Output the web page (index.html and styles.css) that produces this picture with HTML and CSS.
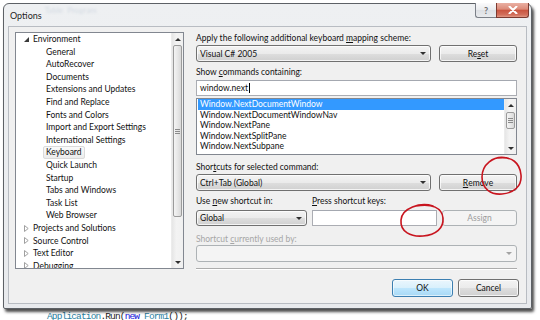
FILE: index.html
```html
<!DOCTYPE html>
<html lang="en">
  <head>
    <meta charset="UTF-8" />
    <title>Options</title>
    <link rel="stylesheet" href="styles.css">
  </head>
  <body>
    <div class="dialog">
      <!-- caption bar -->
      <div class="titlebar">
        <span class="title">Options</span>
        <span class="ghost">Table &nbsp;Program</span>
        <div class="caption-buttons">
          <span class="cap-btn help">?</span>
          <span class="cap-btn close">
            <svg width="10" height="8" viewBox="0 0 10 8"><path d="M1.5 0.5L8.5 7.5M8.5 0.5L1.5 7.5" stroke="#fff" stroke-width="2" stroke-linecap="round"/></svg>
          </span>
        </div>
      </div>

      <div class="client">
        <div class="main">
          <!-- left tree -->
          <div class="tree">
            <ul class="tree-items">
              <li class="node"><span class="arrow"><svg width="5" height="5" viewBox="0 0 5 5"><path d="M5 0V5H0Z" fill="#3a3a3a"/></svg></span>Environment</li>
              <li class="child"><span>General</span></li>
              <li class="child"><span>AutoRecover</span></li>
              <li class="child"><span>Documents</span></li>
              <li class="child"><span>Extensions and Updates</span></li>
              <li class="child"><span>Find and Replace</span></li>
              <li class="child"><span>Fonts and Colors</span></li>
              <li class="child"><span>Import and Export Settings</span></li>
              <li class="child"><span>International Settings</span></li>
              <li class="child"><span class="selected">Keyboard</span></li>
              <li class="child"><span>Quick Launch</span></li>
              <li class="child"><span>Startup</span></li>
              <li class="child"><span>Tabs and Windows</span></li>
              <li class="child"><span>Task List</span></li>
              <li class="child"><span>Web Browser</span></li>
              <li class="node"><span class="arrow"><svg width="5" height="7" viewBox="0 0 5 7"><path d="M0.5 0.5L4.2 3.5L0.5 6.5Z" fill="none" stroke="#a0a0a0"/></svg></span>Projects and Solutions</li>
              <li class="node"><span class="arrow"><svg width="5" height="7" viewBox="0 0 5 7"><path d="M0.5 0.5L4.2 3.5L0.5 6.5Z" fill="none" stroke="#a0a0a0"/></svg></span>Source Control</li>
              <li class="node"><span class="arrow"><svg width="5" height="7" viewBox="0 0 5 7"><path d="M0.5 0.5L4.2 3.5L0.5 6.5Z" fill="none" stroke="#a0a0a0"/></svg></span>Text Editor</li>
              <li class="node"><span class="arrow"><svg width="5" height="7" viewBox="0 0 5 7"><path d="M0.5 0.5L4.2 3.5L0.5 6.5Z" fill="none" stroke="#a0a0a0"/></svg></span>Debugging</li>
            </ul>
            <div class="vscroll tree-scroll">
              <span class="sb-arrow"><i class="tri-up"></i></span>
              <span class="thumb"><i></i><i></i><i></i></span>
              <span class="sb-fill"></span>
              <span class="sb-arrow"><i class="tri-down"></i></span>
            </div>
          </div>

          <!-- right panel -->
          <div class="panel">
            <div class="label">Apply the following additional keyboard <u>m</u>apping scheme:</div>
            <div class="row row-btn gap1">
              <div class="combo">Visual C# 2005<i class="tri-down"></i></div>
              <div class="button">Re<u>s</u>et</div>
            </div>

            <div class="label gap4">Show <u>c</u>ommands containing:</div>
            <div class="textbox gap2">window.next<span class="caret"></span></div>

            <div class="listbox gap2">
              <ul class="list-items">
                <li class="selected">Window.NextDocumentWindow</li>
                <li>Window.NextDocumentWindowNav</li>
                <li>Window.NextPane</li>
                <li>Window.NextSplitPane</li>
                <li>Window.NextSubpane</li>
              </ul>
              <div class="vscroll list-scroll">
                <span class="sb-arrow"><i class="tri-up"></i></span>
                <span class="thumb"><i></i><i></i><i></i></span>
                <span class="sb-fill"></span>
                <span class="sb-arrow"><i class="tri-down"></i></span>
              </div>
            </div>

            <div class="label gap6">Shor<u>t</u>cuts for selected command:</div>
            <div class="row row-btn gap1">
              <div class="combo">Ctrl+Tab (Global)<i class="tri-down"></i></div>
              <div class="button"><u>R</u>emove</div>
            </div>

            <div class="row row-keys gap4">
              <div class="label">Use <u>n</u>ew shortcut in:</div>
              <div class="label"><u>P</u>ress shortcut keys:</div>
            </div>
            <div class="row row-keys small gap3">
              <div class="combo">Global<i class="tri-down"></i></div>
              <div class="textbox"></div>
              <div class="button disabled">Assign</div>
            </div>

            <div class="label disabled-text gap7">Shortcut <u>c</u>urrently used by:</div>
            <div class="combo disabled"><i class="tri-down"></i></div>

            <div class="separator"></div>
          </div>
        </div>

        <div class="footer">
          <div class="button default">OK</div>
          <div class="button">Cancel</div>
        </div>
      </div>
    </div>

    <!-- code editor behind the dialog -->
    <div class="code"><span class="type">Application</span>.Run(<span class="kw">new</span> <span class="type">Form1</span>());</div>

    <!-- red hand-drawn marks over the dialog -->
    <svg class="marks" width="540" height="320" viewBox="0 0 540 320">
      <path d="M507 158C493 155 482 165 482 177C482 189 491 195 502 194C514 193 522 186 521 175C520 163 512 156 498 158" />
      <path d="M433 206C420 202 402 208 401 220C400 232 411 237 423 236C436 235 444 228 443 218C442 208 432 203 416 206" />
    </svg>
  </body>
</html>
```

FILE: styles.css
```css
/* Reset margin and padding for all elements */
* {
  margin: 0;
  padding: 0;
  box-sizing: border-box;
}

body {
  width: 540px;
  height: 320px;
  overflow: hidden;
  position: relative;
  background: #fff;
  font-family: "Lato", sans-serif;
  font-size: 8.5px;
  color: #111;
}

ul {
  list-style: none;
}

u {
  text-decoration-thickness: 1px;
  text-underline-offset: 1px;
}

/* Window frame */
.dialog {
  position: relative;
  z-index: 1;
  margin: 3px 0 0 3px;
  width: 529px;
  height: 306px;
  background: linear-gradient(#eef0f2, #e8eaed);
  border: 1px solid #5d6166;
  border-radius: 6px 6px 2px 2px;
  box-shadow: 2px 3px 3px rgba(0, 0, 0, 0.7);
  display: flex;
  flex-direction: column;
}

.titlebar {
  height: 22px;
  position: relative;
  display: flex;
  align-items: center;
  padding-left: 6px;
}

.title {
  font-size: 9px;
  color: #1e1e1e;
}

.ghost {
  margin-left: 3px;
  margin-top: -10px;
  font-size: 8px;
  color: #d3dae2;
  filter: blur(0.8px);
}

.caption-buttons {
  position: absolute;
  top: -1px;
  right: 2px;
  display: flex;
}

.cap-btn {
  height: 15px;
  display: flex;
  align-items: center;
  justify-content: center;
  border: 1px solid #7b8088;
  border-top: none;
}

.help {
  width: 21px;
  border-right: none;
  border-radius: 0 0 0 3px;
  background: linear-gradient(#fbfbfc, #e9ebee 50%, #dde0e4 51%, #e8eaed);
  color: #6d6d6d;
  font-size: 9px;
  font-weight: bold;
}

.close {
  width: 33px;
  border-color: #7c3a30;
  border-radius: 0 0 3px 0;
  background: linear-gradient(#eab0a3, #dc8a78 45%, #c9533e 50%, #d2705c 85%, #e29a86);
}

.client {
  flex: 1;
  margin: 0 4px 4px 4px;
  background: #f0f0f0;
  border: 1px solid #b8bcc2;
  padding: 5px 9px 0 6px;
  display: flex;
  flex-direction: column;
}

.main {
  display: flex;
  gap: 12px;
  height: 237px;
}

/* Tree view */
.tree {
  width: 169px;
  height: 237px;
  background: #fff;
  border: 1px solid #828790;
  display: flex;
  overflow: hidden;
}

.tree-items {
  flex: 1;
  overflow: hidden;
}

.tree-items li {
  height: 12.6px;
  display: flex;
  align-items: center;
  white-space: nowrap;
}

.tree-items .node {
  padding-left: 8px;
}

.arrow {
  width: 9px;
  display: flex;
  align-items: center;
}

.tree-items .child {
  padding-left: 27px;
}

.tree-items .child span {
  padding: 0 2px;
  height: 12.6px;
  line-height: 11px;
  border: 1px solid transparent;
  border-radius: 2px;
}

.tree-items .child .selected {
  background: linear-gradient(#fafafa, #ececec);
  border-color: #dadada;
}

/* Scroll bars */
.vscroll {
  width: 12px;
  display: flex;
  flex-direction: column;
  background: linear-gradient(90deg, #e6e6e6, #f3f3f3 40%, #f0f0f0);
  border-left: 1px solid #ececec;
}

.sb-arrow {
  height: 12px;
  display: flex;
  align-items: center;
  justify-content: center;
}

.sb-fill {
  flex: 1;
}

.thumb {
  margin: 0 1px;
  border: 1px solid #9b9b9b;
  border-radius: 2px;
  background: linear-gradient(90deg, #f4f4f4, #e8e8e8 50%, #d9d9d9);
  display: flex;
  flex-direction: column;
  align-items: center;
  justify-content: center;
  gap: 1px;
}

.thumb i {
  width: 5px;
  height: 1px;
  background: #8a8a8a;
}

.tree-scroll .thumb {
  height: 172px;
}

.list-scroll .thumb {
  height: 17px;
  margin-top: 1px;
}

.tri-up,
.tri-down {
  width: 0;
  height: 0;
  border-left: 3px solid transparent;
  border-right: 3px solid transparent;
}

.tri-up {
  border-bottom: 3px solid #303030;
}

.tri-down {
  border-top: 3px solid #303030;
}

/* Right side */
.panel {
  width: 321px;
  display: flex;
  flex-direction: column;
}

.label {
  height: 12px;
  line-height: 12px;
  white-space: nowrap;
}

.gap1 { margin-top: 1px; }
.gap2 { margin-top: 2px; }
.gap3 { margin-top: 3px; }
.gap4 { margin-top: 4px; }
.gap6 { margin-top: 6px; }
.gap7 { margin-top: 7px; }

.row {
  display: grid;
  height: 17px;
}

.row-btn {
  grid-template-columns: 1fr 78px;
  column-gap: 8px;
}

.row-keys {
  grid-template-columns: 111px 1fr 75px;
  column-gap: 5px;
  height: 12px;
}

.row-keys.small {
  height: 16px;
}

.combo,
.button {
  border: 1px solid #707070;
  border-radius: 3px;
  background: linear-gradient(#f3f3f3, #ebebeb 50%, #dedede 51%, #d0d0d0);
  box-shadow: inset 0 0 0 1px rgba(255, 255, 255, 0.75);
  display: flex;
  align-items: center;
}

.combo {
  justify-content: space-between;
  padding: 0 4px 0 3px;
}

.combo.disabled {
  height: 17px;
  justify-content: flex-end;
  background: #f4f4f4;
  border-color: #adb2b5;
  box-shadow: none;
}

.combo.disabled .tri-down {
  border-top-color: #a3a3a3;
}

.button {
  justify-content: center;
}

.button.disabled {
  background: #f4f4f4;
  border-color: #adb2b5;
  box-shadow: none;
  color: #9c9c9c;
}

.button.default {
  border-color: #3c7fb1;
  background: linear-gradient(#eaf6fd, #d9f0fc 50%, #bee6fd 51%, #a7d9f5);
  box-shadow: inset 0 0 0 1px rgba(255, 255, 255, 0.6);
}

.textbox {
  height: 16px;
  background: #fff;
  border: 1px solid #abadb3;
  border-top-color: #a4a8b0;
  padding-left: 3px;
  display: flex;
  align-items: center;
}

.caret {
  width: 1px;
  height: 10px;
  background: #000;
  margin-left: 1px;
}

.listbox {
  height: 57px;
  background: #fff;
  border: 1px solid #828790;
  display: flex;
}

.list-items {
  flex: 1;
  padding-left: 1px;
}

.list-items li {
  height: 10.5px;
  line-height: 10.5px;
  padding-left: 2px;
  white-space: nowrap;
}

.list-items .selected {
  background: #3399ff;
  color: #fff;
}

.disabled-text {
  color: #a6a6a6;
}

.separator {
  margin-top: 6px;
  height: 1px;
  background: #acacac;
  box-shadow: 0 1px 0 #fff;
}

.footer {
  margin-top: 10px;
  margin-right: -2px;
  display: flex;
  justify-content: flex-end;
  gap: 5px;
}

.footer .button {
  width: 61px;
  height: 18px;
}

/* Editor text peeking out below the dialog */
.code {
  margin-top: 2px;
  padding-left: 47px;
  font-family: "Liberation Mono", monospace;
  font-size: 9.5px;
  letter-spacing: -0.85px;
  line-height: 12px;
  color: #222;
}

.code .kw {
  color: #1010d8;
}

.code .type {
  color: #2b7f9f;
}

/* Annotation circles */
.marks {
  position: absolute;
  top: 0;
  left: 0;
  z-index: 2;
  pointer-events: none;
}

.marks path {
  fill: none;
  stroke: #c8151f;
  stroke-width: 1.6;
  stroke-linecap: round;
}
```
